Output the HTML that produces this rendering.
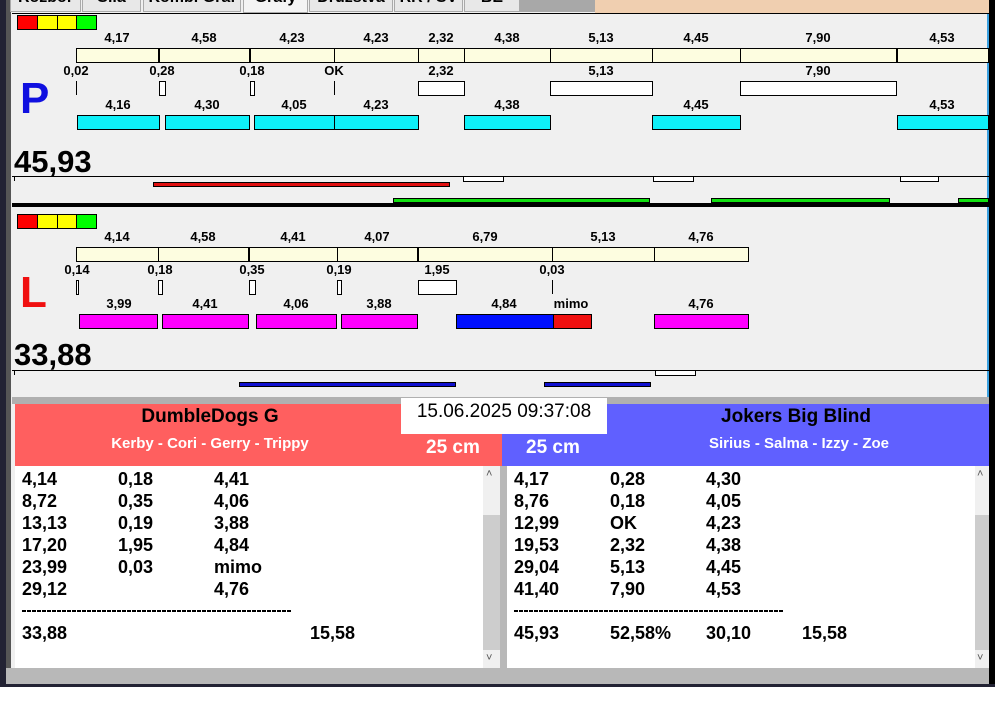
<!DOCTYPE html>
<html><head><meta charset="utf-8">
<style>
*{margin:0;padding:0;box-sizing:border-box}
body{width:995px;height:716px;background:#fff;position:relative;overflow:hidden;font-family:"Liberation Sans",Arial,sans-serif}
.a{position:absolute}
.t{position:absolute;font-weight:bold;font-size:13px;color:#000;transform:translateX(-50%);white-space:nowrap;line-height:14px}
.bx{position:absolute;border:1px solid #000}
.tab{position:absolute;top:0;height:12px;background:#e8e8e8;border:1px solid #aaa;border-top:none;overflow:hidden;font-size:16px;font-weight:bold;color:#000}
.tab span{position:absolute;top:-11px;left:0;right:0;text-align:center}
.r{position:absolute;font-weight:bold;font-size:18px;line-height:22px}
.dash{position:absolute;height:2px;background:repeating-linear-gradient(90deg,#000 0 4px,transparent 4px 5px)}
</style></head><body>
<div class="a" style="left:0;top:0;width:995px;height:687px;background:#f0f0f0"></div>
<div class="a" style="left:0;top:0;width:6px;height:687px;background:#223"></div>
<div class="a" style="left:6px;top:0;width:5px;height:687px;background:#555"></div>
<div class="a" style="left:595px;top:0;width:394px;height:13px;background:#f0cfb0"></div>
<div class="a" style="left:520px;top:0;width:75px;height:12px;background:#a8a8a8"></div>
<div class="tab" style="left:10px;width:71px"><span>Rozbor</span></div>
<div class="tab" style="left:82px;width:59px"><span>Síla</span></div>
<div class="tab" style="left:143px;width:98px"><span>Kombi Graf</span></div>
<div class="tab" style="left:243px;width:65px;background:#f4f4f4;height:13px"><span>Grafy</span></div>
<div class="tab" style="left:309px;width:84px"><span>Družstva</span></div>
<div class="tab" style="left:394px;width:69px"><span>RR / SV</span></div>
<div class="tab" style="left:464px;width:56px"><span>BE</span></div>
<div class="a" style="left:989px;top:0;width:6px;height:687px;background:#000"></div>
<div class="a" style="left:987px;top:13px;width:2px;height:660px;background:#3aa0e0"></div>

<!-- P panel -->
<div class="a" style="left:12px;top:13px;width:977px;height:1px;background:#000"></div>
<div class="bx" style="left:17px;top:15px;width:21px;height:15px;background:#f00"></div>
<div class="bx" style="left:37px;top:15px;width:21px;height:15px;background:#ff0"></div>
<div class="bx" style="left:57px;top:15px;width:20px;height:15px;background:#ff0"></div>
<div class="bx" style="left:76px;top:15px;width:21px;height:15px;background:#0f0"></div>

<div class="bx" style="left:76px;top:48px;width:913px;height:15px;background:#fdfde0"></div>
<div class="a" style="left:158px;top:48px;width:2px;height:15px;background:#000"></div>
<div class="a" style="left:249px;top:48px;width:2px;height:15px;background:#000"></div>
<div class="a" style="left:334px;top:48px;width:1px;height:15px;background:#000"></div>
<div class="a" style="left:418px;top:48px;width:1px;height:15px;background:#000"></div>
<div class="a" style="left:464px;top:48px;width:1px;height:15px;background:#000"></div>
<div class="a" style="left:550px;top:48px;width:1px;height:15px;background:#000"></div>
<div class="a" style="left:652px;top:48px;width:1px;height:15px;background:#000"></div>
<div class="a" style="left:740px;top:48px;width:1px;height:15px;background:#000"></div>
<div class="a" style="left:896px;top:48px;width:2px;height:15px;background:#000"></div>
<div class="t" style="left:117px;top:31px">4,17</div>
<div class="t" style="left:204px;top:31px">4,58</div>
<div class="t" style="left:292px;top:31px">4,23</div>
<div class="t" style="left:376px;top:31px">4,23</div>
<div class="t" style="left:441px;top:31px">2,32</div>
<div class="t" style="left:507px;top:31px">4,38</div>
<div class="t" style="left:601px;top:31px">5,13</div>
<div class="t" style="left:696px;top:31px">4,45</div>
<div class="t" style="left:818px;top:31px">7,90</div>
<div class="t" style="left:942px;top:31px">4,53</div>

<div class="t" style="left:76px;top:64px">0,02</div>
<div class="t" style="left:162px;top:64px">0,28</div>
<div class="t" style="left:252px;top:64px">0,18</div>
<div class="t" style="left:334px;top:64px">OK</div>
<div class="t" style="left:441px;top:64px">2,32</div>
<div class="t" style="left:601px;top:64px">5,13</div>
<div class="t" style="left:818px;top:64px">7,90</div>
<div class="a" style="left:76px;top:81px;width:1px;height:14px;background:#000"></div>
<div class="bx" style="left:159px;top:81px;width:7px;height:15px;background:#fff"></div>
<div class="bx" style="left:250px;top:81px;width:5px;height:15px;background:#fff"></div>
<div class="a" style="left:334px;top:81px;width:1px;height:14px;background:#000"></div>
<div class="bx" style="left:418px;top:81px;width:47px;height:15px;background:#fff"></div>
<div class="bx" style="left:550px;top:81px;width:103px;height:15px;background:#fff"></div>
<div class="bx" style="left:740px;top:81px;width:157px;height:15px;background:#fff"></div>

<div class="t" style="left:118px;top:98px">4,16</div>
<div class="t" style="left:207px;top:98px">4,30</div>
<div class="t" style="left:294px;top:98px">4,05</div>
<div class="t" style="left:376px;top:98px">4,23</div>
<div class="t" style="left:507px;top:98px">4,38</div>
<div class="t" style="left:696px;top:98px">4,45</div>
<div class="t" style="left:942px;top:98px">4,53</div>
<div class="bx" style="left:77px;top:115px;width:83px;height:15px;background:#0ef0f8"></div>
<div class="bx" style="left:165px;top:115px;width:85px;height:15px;background:#0ef0f8"></div>
<div class="bx" style="left:254px;top:115px;width:81px;height:15px;background:#0ef0f8"></div>
<div class="bx" style="left:334px;top:115px;width:85px;height:15px;background:#0ef0f8"></div>
<div class="bx" style="left:464px;top:115px;width:87px;height:15px;background:#0ef0f8"></div>
<div class="bx" style="left:652px;top:115px;width:89px;height:15px;background:#0ef0f8"></div>
<div class="bx" style="left:897px;top:115px;width:92px;height:15px;background:#0ef0f8"></div>

<div class="a" style="left:20px;top:74px;font-size:44px;font-weight:bold;color:#1010e0;line-height:50px">P</div>
<div class="a" style="left:14px;top:144px;font-size:31px;font-weight:bold;line-height:36px">45,93</div>
<div class="a" style="left:12px;top:176px;width:977px;height:1px;background:#000"></div>
<div class="a" style="left:14px;top:176px;width:1px;height:5px;background:#000"></div>
<div class="bx" style="left:463px;top:176px;width:41px;height:6px;background:#fff"></div>
<div class="bx" style="left:653px;top:176px;width:41px;height:6px;background:#fff"></div>
<div class="bx" style="left:900px;top:176px;width:39px;height:6px;background:#fff"></div>
<div class="bx" style="left:153px;top:182px;width:297px;height:5px;background:#e01010"></div>
<div class="bx" style="left:393px;top:198px;width:257px;height:5px;background:#10e010"></div>
<div class="bx" style="left:711px;top:198px;width:179px;height:5px;background:#10e010"></div>
<div class="bx" style="left:958px;top:198px;width:31px;height:5px;background:#10e010"></div>
<div class="a" style="left:12px;top:203px;width:977px;height:4px;background:#000"></div>

<!-- L panel -->
<div class="bx" style="left:17px;top:214px;width:21px;height:15px;background:#f00"></div>
<div class="bx" style="left:37px;top:214px;width:21px;height:15px;background:#ff0"></div>
<div class="bx" style="left:57px;top:214px;width:20px;height:15px;background:#ff0"></div>
<div class="bx" style="left:76px;top:214px;width:21px;height:15px;background:#0f0"></div>
<div class="bx" style="left:76px;top:247px;width:673px;height:15px;background:#fdfde0"></div>
<div class="a" style="left:158px;top:247px;width:1px;height:15px;background:#000"></div>
<div class="a" style="left:248px;top:247px;width:2px;height:15px;background:#000"></div>
<div class="a" style="left:337px;top:247px;width:1px;height:15px;background:#000"></div>
<div class="a" style="left:417px;top:247px;width:2px;height:15px;background:#000"></div>
<div class="a" style="left:552px;top:247px;width:1px;height:15px;background:#000"></div>
<div class="a" style="left:654px;top:247px;width:1px;height:15px;background:#000"></div>
<div class="t" style="left:117px;top:230px">4,14</div>
<div class="t" style="left:203px;top:230px">4,58</div>
<div class="t" style="left:293px;top:230px">4,41</div>
<div class="t" style="left:377px;top:230px">4,07</div>
<div class="t" style="left:485px;top:230px">6,79</div>
<div class="t" style="left:603px;top:230px">5,13</div>
<div class="t" style="left:701px;top:230px">4,76</div>
<div class="t" style="left:77px;top:263px">0,14</div>
<div class="t" style="left:160px;top:263px">0,18</div>
<div class="t" style="left:252px;top:263px">0,35</div>
<div class="t" style="left:339px;top:263px">0,19</div>
<div class="t" style="left:437px;top:263px">1,95</div>
<div class="t" style="left:552px;top:263px">0,03</div>
<div class="bx" style="left:76px;top:280px;width:3px;height:15px;background:#fff"></div>
<div class="bx" style="left:158px;top:280px;width:5px;height:15px;background:#fff"></div>
<div class="bx" style="left:249px;top:280px;width:7px;height:15px;background:#fff"></div>
<div class="bx" style="left:337px;top:280px;width:5px;height:15px;background:#fff"></div>
<div class="bx" style="left:418px;top:280px;width:39px;height:15px;background:#fff"></div>
<div class="a" style="left:552px;top:280px;width:1px;height:14px;background:#000"></div>
<div class="t" style="left:119px;top:297px">3,99</div>
<div class="t" style="left:205px;top:297px">4,41</div>
<div class="t" style="left:296px;top:297px">4,06</div>
<div class="t" style="left:379px;top:297px">3,88</div>
<div class="t" style="left:504px;top:297px">4,84</div>
<div class="t" style="left:571px;top:297px">mimo</div>
<div class="t" style="left:701px;top:297px">4,76</div>
<div class="bx" style="left:79px;top:314px;width:79px;height:15px;background:#f0f"></div>
<div class="bx" style="left:162px;top:314px;width:87px;height:15px;background:#f0f"></div>
<div class="bx" style="left:256px;top:314px;width:81px;height:15px;background:#f0f"></div>
<div class="bx" style="left:341px;top:314px;width:77px;height:15px;background:#f0f"></div>
<div class="bx" style="left:456px;top:314px;width:98px;height:15px;background:#0010ff"></div>
<div class="bx" style="left:553px;top:314px;width:39px;height:15px;background:#f01010"></div>
<div class="bx" style="left:654px;top:314px;width:95px;height:15px;background:#f0f"></div>
<div class="a" style="left:20px;top:268px;font-size:44px;font-weight:bold;color:#f01010;line-height:50px">L</div>
<div class="a" style="left:14px;top:337px;font-size:31px;font-weight:bold;line-height:36px">33,88</div>
<div class="a" style="left:12px;top:370px;width:977px;height:1px;background:#000"></div>
<div class="a" style="left:14px;top:370px;width:1px;height:5px;background:#000"></div>
<div class="bx" style="left:655px;top:370px;width:41px;height:6px;background:#fff"></div>
<div class="bx" style="left:239px;top:382px;width:217px;height:5px;background:#1010d0"></div>
<div class="bx" style="left:544px;top:382px;width:107px;height:5px;background:#1010d0"></div>
<div class="a" style="left:12px;top:397px;width:977px;height:7px;background:#b0b0b0"></div>

<!-- headers -->
<div class="a" style="left:15px;top:404px;width:487px;height:62px;background:#ff5f5f"></div>
<div class="a" style="left:502px;top:404px;width:487px;height:62px;background:#6060ff"></div>
<div class="a" style="left:401px;top:398px;width:206px;height:36px;background:#fff;font-size:19px;text-align:center;line-height:28px">15.06.2025 09:37:08</div>
<div class="a" style="left:110px;top:404px;width:200px;text-align:center;font-size:19px;font-weight:bold;line-height:26px">DumbleDogs G</div>
<div class="a" style="left:60px;top:434px;width:300px;text-align:center;font-size:15px;font-weight:bold;color:#fff;line-height:20px">Kerby - Cori - Gerry - Trippy</div>
<div class="a" style="left:426px;top:436px;font-size:19px;font-weight:bold;color:#fff;line-height:24px">25 cm</div>
<div class="a" style="left:526px;top:436px;font-size:19px;font-weight:bold;color:#fff;line-height:24px">25 cm</div>
<div class="a" style="left:646px;top:404px;width:300px;text-align:center;font-size:19px;font-weight:bold;line-height:26px">Jokers Big Blind</div>
<div class="a" style="left:649px;top:434px;width:300px;text-align:center;font-size:15px;font-weight:bold;color:#fff;line-height:20px">Sirius - Salma - Izzy - Zoe</div>

<!-- lists -->
<div class="a" style="left:15px;top:466px;width:468px;height:202px;background:#fff"></div>
<div class="a" style="left:483px;top:466px;width:17px;height:202px;background:#f0f0f0"></div>
<div class="a" style="left:483px;top:515px;width:17px;height:135px;background:#cdcdcd"></div>
<div class="a" style="left:486px;top:468px;font-size:11px;color:#555">˄</div>
<div class="a" style="left:486px;top:652px;font-size:11px;color:#555">˅</div>
<div class="a" style="left:500px;top:466px;width:7px;height:202px;background:#b8b8b8"></div>
<div class="a" style="left:507px;top:466px;width:468px;height:202px;background:#fff"></div>
<div class="a" style="left:975px;top:466px;width:14px;height:202px;background:#f0f0f0"></div>
<div class="a" style="left:975px;top:515px;width:14px;height:135px;background:#cdcdcd"></div>
<div class="a" style="left:977px;top:468px;font-size:11px;color:#555">˄</div>
<div class="a" style="left:977px;top:652px;font-size:11px;color:#555">˅</div>

<div class="r" style="left:22px;top:468px">4,14<br>8,72<br>13,13<br>17,20<br>23,99<br>29,12</div>
<div class="r" style="left:118px;top:468px">0,18<br>0,35<br>0,19<br>1,95<br>0,03</div>
<div class="r" style="left:214px;top:468px">4,41<br>4,06<br>3,88<br>4,84<br>mimo<br>4,76</div>
<div class="dash" style="left:22px;top:610px;width:270px"></div>
<div class="r" style="left:22px;top:622px">33,88</div>
<div class="r" style="left:310px;top:622px">15,58</div>

<div class="r" style="left:514px;top:468px">4,17<br>8,76<br>12,99<br>19,53<br>29,04<br>41,40</div>
<div class="r" style="left:610px;top:468px">0,28<br>0,18<br>OK<br>2,32<br>5,13<br>7,90</div>
<div class="r" style="left:706px;top:468px">4,30<br>4,05<br>4,23<br>4,38<br>4,45<br>4,53</div>
<div class="dash" style="left:514px;top:610px;width:270px"></div>
<div class="r" style="left:514px;top:622px">45,93</div>
<div class="r" style="left:610px;top:622px">52,58%</div>
<div class="r" style="left:706px;top:622px">30,10</div>
<div class="r" style="left:802px;top:622px">15,58</div>

<div class="a" style="left:6px;top:668px;width:983px;height:16px;background:#b8b8b8"></div>
<div class="a" style="left:0;top:684px;width:995px;height:3px;background:#223"></div>
</body></html>
